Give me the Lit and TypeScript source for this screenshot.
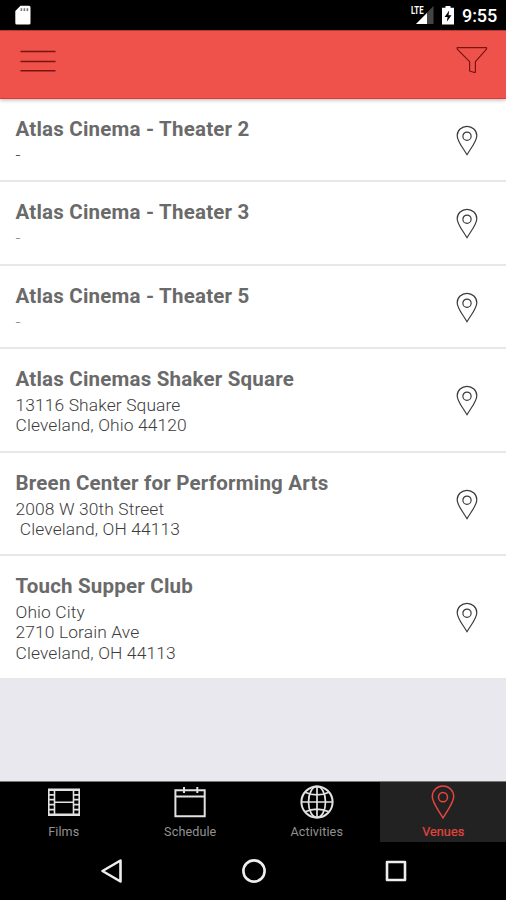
import { LitElement, html, css, svg } from "lit";
import { customElement, property } from "lit/decorators.js";
import { classMap } from "lit/directives/class-map.js";

interface Venue {
  name: string;
  lines: string[];
  faint?: boolean;
}

const venues: Venue[] = [
  { name: "Atlas Cinema - Theater 2", lines: ["-"] },
  { name: "Atlas Cinema - Theater 3", lines: ["-"], faint: true },
  { name: "Atlas Cinema - Theater 5", lines: ["-"], faint: true },
  { name: "Atlas Cinemas Shaker Square", lines: ["13116 Shaker Square", "Cleveland, Ohio 44120"] },
  { name: "Breen Center for Performing Arts", lines: ["2008 W 30th Street", " Cleveland, OH 44113"] },
  { name: "Touch Supper Club", lines: ["Ohio City", "2710 Lorain Ave", "Cleveland, OH 44113"] },
];

const pin = svg`<path d="M12 1C6.2 1 1.3 5.4 1.3 11.2C1.3 17 6.5 23 12 32C17.5 23 22.7 17 22.7 11.2C22.7 5.4 17.8 1 12 1Z"/><circle cx="12" cy="11.8" r="4.5"/>`;

const tabIcons = {
  films: html`<svg width="34" height="34" viewBox="0 0 34 34">
    <path d="M1.8 4.2H32.2V30.2H1.8ZM7.5 4V30M26.5 4V30M7.5 17.2H26.5" stroke-width="1.6"/>
    <path d="M2 4.9H32M2 29.6H32" stroke-width="2"/>
    <path d="M2 9.8H7M2 14.6H7M2 19.6H7M2 24.6H7M27 9.8H32M27 14.6H32M27 19.6H32M27 24.6H32" stroke-width="1.8"/>
  </svg>`,
  schedule: html`<svg width="34" height="34" viewBox="0 0 34 34">
    <path d="M2.4 5.3H31.7V31.2H2.4ZM2.4 11.4H31.7M11 2V8M24.3 2V8" stroke-width="2"/>
  </svg>`,
  activities: html`<svg width="34" height="34" viewBox="0 0 34 34">
    <circle cx="17" cy="17" r="15.6" stroke-width="2"/>
    <ellipse cx="17" cy="17" rx="8.5" ry="15.6" stroke-width="1.7"/>
    <path d="M17 1.4V32.6M1.4 17H32.6M5 7.2Q17 12.6 29 7.2M5 26.8Q17 21.4 29 26.8" stroke-width="1.7"/>
  </svg>`,
  venues: html`<svg width="24" height="34" viewBox="0 0 24 33" preserveAspectRatio="none"><g stroke-width="1.5">${pin}</g></svg>`,
};

@customElement("status-bar")
class StatusBar extends LitElement {
  static styles = css`
    :host { display: flex; height: 29.5px; background: #000; color: #fff; align-items: flex-start; }
    .card { margin: 5px 0 0 15px; }
    .right { margin-left: auto; display: flex; padding-right: 9px; }
    .signal { margin: 5px 8px 0 0; }
    .lte { font: 700 11px Roboto, sans-serif; fill: #fff; stroke: #000; stroke-width: 1.5px; paint-order: stroke; }
    .battery { margin: 6px 8px 0 0; }
    .time { font: 500 18px/32px Roboto, sans-serif; width: 35px; white-space: nowrap; letter-spacing: -0.1px; }
  `;
  render() {
    return html`
      <svg class="card" width="16" height="20" viewBox="0 0 16 20">
        <path d="M5.5 .7H14a1.5 1.5 0 0 1 1.5 1.5V18a1.5 1.5 0 0 1-1.5 1.5H1.8A1.5 1.5 0 0 1 .3 18V6Z" fill="#fff"/>
        <path d="M6.4 3.2V6M9.4 3.2V6M12.4 3.2V6" stroke="#777" stroke-width="1.6"/>
      </svg>
      <div class="right">
        <svg class="signal" width="23" height="20" viewBox="0 0 23 20">
          <path d="M22.5 1V19H5Z" fill="#444"/>
          <path d="M16 8V19H5Z" fill="#fff"/>
          <text class="lte" x="0" y="9.3" textLength="12.5" lengthAdjust="spacingAndGlyphs">LTE</text>
        </svg>
        <svg class="battery" width="12" height="19" viewBox="0 0 12 19">
          <path d="M3.5 0H8.5V1.8H12V18.5H0V1.8H3.5Z" fill="#fff"/>
          <path d="M7.2 4.5L2.6 11H5.6L4.8 15.8L9.5 9.2H6.5Z" fill="#000"/>
        </svg>
        <span class="time">9:55</span>
      </div>`;
  }
}

@customElement("app-header")
class AppHeader extends LitElement {
  static styles = css`
    :host {
      display: flex; justify-content: space-between; align-items: flex-start; box-sizing: border-box;
      height: 69.5px; padding: 15.5px 18px 0 20px; background: #ee524b;
      border-top: 1px solid #b63a33; border-bottom: 1px solid #e03a32;
      box-shadow: 0 1px 4px rgba(0, 0, 0, 0.3); position: relative;
    }
    svg { fill: none; stroke: #781411; }
    .menu { margin-top: 2.5px; }
  `;
  render() {
    return html`
      <svg class="menu" width="36" height="25" viewBox="0 0 36 25">
        <path d="M.5 2.5H35.5M.5 12.5H35.5M.5 21.8H35.5" stroke-width="1.6"/>
      </svg>
      <svg width="32" height="29" viewBox="0 0 32 29">
        <path d="M1.2 1.6H30.5V3.2L19.4 15.6V26.3H17.6L13.6 25V15.6L1.2 3.2Z" stroke-width="1.2" stroke-linejoin="round"/>
      </svg>`;
  }
}

@customElement("venue-row")
class VenueRow extends LitElement {
  @property({ attribute: false }) venue!: Venue;
  static styles = css`
    :host {
      display: flex; justify-content: space-between; align-items: center; box-sizing: border-box;
      padding: 16.8px 28px 15.4px 15.5px; background: #fff; border-bottom: 2px solid #e8e8e9;
    }
    .name { font: 700 20.5px/26px Roboto, sans-serif; letter-spacing: 0.21px; color: #6a6a6a; white-space: nowrap; }
    .lines { margin-top: 3px; font: 300 17.4px/20.2px Roboto, sans-serif; letter-spacing: 0.12px; color: #3c3c3c; }
    .line { white-space: pre; }
    .faint { color: #888; }
    svg { fill: none; stroke: #3a3a3a; stroke-width: 1.3; flex: none; }
  `;
  render() {
    const { name, lines, faint } = this.venue;
    return html`
      <div>
        <div class="name">${name}</div>
        <div class=${classMap({ lines: true, faint: !!faint })}>
          ${lines.map((line) => html`<div class="line">${line}</div>`)}
        </div>
      </div>
      <svg width="22" height="31" viewBox="0 0 24 33">${pin}</svg>`;
  }
}

@customElement("tab-item")
class TabItem extends LitElement {
  @property() icon: keyof typeof tabIcons = "films";
  @property() label = "";
  @property({ type: Boolean, reflect: true }) active = false;
  static styles = css`
    :host { display: flex; flex-direction: column; align-items: center; flex: 1; padding: 3px 0 0 1px; color: #929292; }
    :host([active]) { background: #222; color: #e5463f; }
    svg { display: block; fill: none; stroke: #e2e2e2; }
    :host([active]) svg { stroke: #e5463f; }
    .label { margin-top: 5px; font: 400 12.6px/16px Roboto, sans-serif; letter-spacing: 0.1px; }
    :host([active]) .label { -webkit-text-stroke: 0.2px; }
  `;
  render() {
    return html`${tabIcons[this.icon]}<div class="label">${this.label}</div>`;
  }
}

@customElement("app-root")
class AppRoot extends LitElement {
  static styles = css`
    :host { display: flex; flex-direction: column; width: 506px; height: 900px; background: #e9e8ee; overflow: hidden; }
    .list { flex: 1; }
    .tabs { display: flex; height: 61px; background: #000; border-top: 1px solid #777; box-sizing: border-box; }
    .nav { display: flex; height: 58px; background: #000; align-items: center; justify-content: space-between; padding: 0 98px 0 100px; box-sizing: border-box; }
    .nav svg { fill: none; stroke: #eee; stroke-width: 2.6; stroke-linejoin: round; }
  `;
  render() {
    return html`
      <status-bar></status-bar>
      <app-header></app-header>
      <div class="list">${venues.map((v) => html`<venue-row .venue=${v}></venue-row>`)}</div>
      <div class="tabs">
        <tab-item icon="films" label="Films"></tab-item>
        <tab-item icon="schedule" label="Schedule"></tab-item>
        <tab-item icon="activities" label="Activities"></tab-item>
        <tab-item icon="venues" label="Venues" active></tab-item>
      </div>
      <div class="nav">
        <svg width="24" height="26" viewBox="0 0 24 26"><path d="M2.5 13L20.5 2.5V23.5Z"/></svg>
        <svg width="26" height="26" viewBox="0 0 26 26"><circle cx="13" cy="13" r="10.6"/></svg>
        <svg width="24" height="24" viewBox="0 0 24 24"><path d="M3 3H21V21H3Z"/></svg>
      </div>`;
  }
}
